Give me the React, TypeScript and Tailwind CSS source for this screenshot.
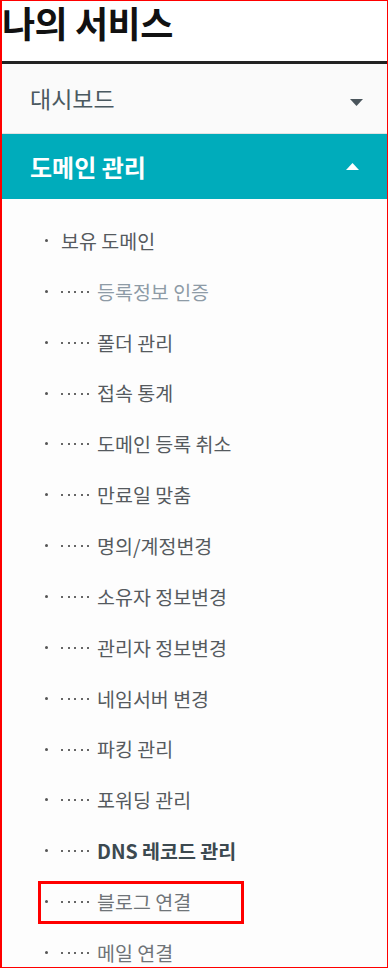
import React from "react";

const font = { fontFamily: '"Noto Sans CJK KR", "Noto Sans", sans-serif' };

type Item = { label: string; sub?: boolean; tone?: "muted" | "bold" | "light" | "normal" };

const items: Item[] = [
  { label: "보유 도메인" },
  { label: "등록정보 인증", sub: true, tone: "muted" },
  { label: "폴더 관리", sub: true },
  { label: "접속 통계", sub: true },
  { label: "도메인 등록 취소", sub: true },
  { label: "만료일 맞춤", sub: true },
  { label: "명의/계정변경", sub: true },
  { label: "소유자 정보변경", sub: true },
  { label: "관리자 정보변경", sub: true },
  { label: "네임서버 변경", sub: true },
  { label: "파킹 관리", sub: true },
  { label: "포워딩 관리", sub: true },
  { label: "DNS 레코드 관리", sub: true, tone: "bold" },
  { label: "블로그 연결", sub: true, tone: "light" },
  { label: "메일 연결", sub: true, tone: "light" },
];

const toneClass = (tone?: Item["tone"]) => {
  if (tone === "muted") return "text-[#8e9ba6]";
  if (tone === "bold") return "text-[#3c4950] font-bold";
  if (tone === "light") return "text-[#6f7478]";
  return "text-[#555a5e]";
};

const Caret = ({ up, color }: { up?: boolean; color: string }) => (
  <svg width="13" height="7" viewBox="0 0 13 7">
    <path d={up ? "M0 7 L6.5 0 L13 7 Z" : "M0 0 L13 0 L6.5 7 Z"} fill={color} />
  </svg>
);

const Dot = () => <span className="w-[2px] h-[2px] bg-[#666]" />;

export default function App() {
  return (
    <div
      style={font}
      className="w-[388px] h-[968px] overflow-hidden bg-white border-l-2 border-t border-r border-b border-[#ff0000] box-border"
    >
      <header className="h-[60px] flex items-start">
        <h1 className="text-[36px] font-bold text-[#111] leading-[1.2] tracking-[-0.5px]">나의 서비스</h1>
      </header>
      <div className="h-[3px] bg-[#222]" />

      <div className="h-[70px] bg-[#fafafa] flex items-center justify-between pl-[28px] pr-[24px] border-b border-[#e2e2e2]">
        <span className="text-[23px] text-[#4a5960]">대시보드</span>
        <span className="mt-[8px]">
          <Caret color="#4a555c" />
        </span>
      </div>

      <div className="h-[65px] bg-[#00acbb] flex items-center justify-between pl-[28px] pr-[28px]">
        <span className="text-[24px] font-bold text-white">도메인 관리</span>
        <Caret up color="#ffffff" />
      </div>

      <ul className="bg-[#fdfdfd] pt-[16px]">
        {items.map((it) => (
          <li key={it.label} className="h-[50.86px] flex items-center pl-[43px]">
            <div className="relative flex items-center">
              {it.label === "블로그 연결" && (
                <span className="absolute left-[-7px] top-[-6px] w-[206px] h-[43px] border-[3px] border-[#ff0000]" />
              )}
              <span className="w-[16px] flex items-center">
                <span className="w-[3px] h-[3px] bg-[#555] rounded-full" />
              </span>
              {it.sub && (
                <span className="flex items-center gap-[4.5px] mr-[8px] mt-[1px]">
                  <Dot />
                  <Dot />
                  <Dot />
                  <Dot />
                  <Dot />
                </span>
              )}
              <span className={`text-[19.5px] ${toneClass(it.tone)}`}>{it.label}</span>
            </div>
          </li>
        ))}
      </ul>
    </div>
  );
}
